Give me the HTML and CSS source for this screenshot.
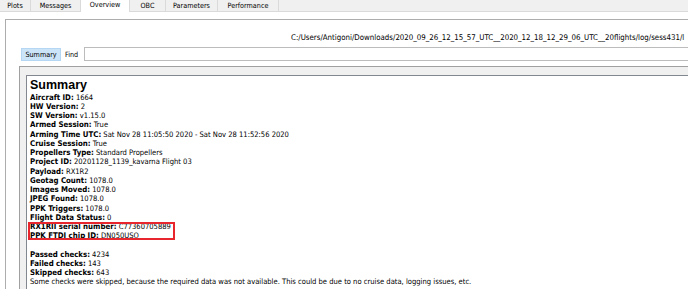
FILE: index.html
```html
<!DOCTYPE html>
<html>
<head>
<meta charset="utf-8">
<link rel="stylesheet" href="styles.css">
</head>
<body>
<div class="tabs">
  <div class="tab w-plots">Plots</div>
  <div class="tab w-msg">Messages</div>
  <div class="tab tab-active w-ov">Overview</div>
  <div class="tab w-obc">OBC</div>
  <div class="tab w-par">Parameters</div>
  <div class="tab w-perf">Performance</div>
</div>
<div class="panel">
  <div class="path">C:/Users/Antigoni/Downloads/2020_09_26_12_15_57_UTC__2020_12_18_12_29_06_UTC__20flights/log/sess431/l</div>
  <div class="findrow">
    <div class="btn">Summary</div>
    <div class="findlabel">Find</div>
    <div class="findinput"></div>
  </div>
  <div class="frame">
    <div class="content">
      <div class="title">Summary</div>
      <div class="line"><b>Aircraft ID:</b> 1664</div>
      <div class="line"><b>HW Version:</b> 2</div>
      <div class="line"><b>SW Version:</b> v1.15.0</div>
      <div class="line"><b>Armed Session:</b> True</div>
      <div class="line"><b>Arming Time UTC:</b> Sat Nov 28 11:05:50 2020 - Sat Nov 28 11:52:56 2020</div>
      <div class="line"><b>Cruise Session:</b> True</div>
      <div class="line"><b>Propellers Type:</b> Standard Propellers</div>
      <div class="line"><b>Project ID:</b> 20201128_1139_kavarna Flight 03</div>
      <div class="line"><b>Payload:</b> RX1R2</div>
      <div class="line"><b>Geotag Count:</b> 1078.0</div>
      <div class="line"><b>Images Moved:</b> 1078.0</div>
      <div class="line"><b>JPEG Found:</b> 1078.0</div>
      <div class="line"><b>PPK Triggers:</b> 1078.0</div>
      <div class="line"><b>Flight Data Status:</b> 0</div>
      <div class="marked">
        <div class="line"><b>RX1RII serial number:</b> C77360705889</div>
        <div class="line"><b>PPK FTDI chip ID:</b> DN050USO</div>
      </div>
      <div class="spacer"></div>
      <div class="line"><b>Passed checks:</b> 4234</div>
      <div class="line"><b>Failed checks:</b> 143</div>
      <div class="line"><b>Skipped checks:</b> 643</div>
      <div class="line">Some checks were skipped, because the required data was not available. This could be due to no cruise data, logging issues, etc.</div>
    </div>
  </div>
</div>
</body>
</html>
```
FILE: styles.css
```css
html, body {
  margin: 0;
  padding: 0;
  background: #ffffff;
  overflow: hidden;
}
body {
  width: 688px;
  height: 289px;
  font-family: "DejaVu Sans Condensed", "DejaVu Sans", sans-serif;
  color: #000;
}
.tabs {
  display: flex;
  height: 11px;
  background: #f0f0f0;
  border-bottom: 1px solid #dadada;
}
.tab {
  box-sizing: border-box;
  height: 11px;
  font-size: 7.2px;
  line-height: 11px;
  text-align: center;
  border-right: 1px solid #dadada;
  color: #000;
}
.tab-active {
  background: #fff;
  height: 12px;
  line-height: 10px;
  margin-bottom: -1px;
}
.w-plots { width: 31px; }
.w-msg { width: 50px; }
.w-ov { width: 49px; }
.w-obc { width: 36px; }
.w-par { width: 52px; }
.w-perf { width: 61px; }

.panel {
  margin: 7px 0 0 5px;
  border-top: 1px solid #adadad;
  border-left: 1px solid #adadad;
  height: 269px;
  overflow: hidden;
}
.path {
  margin-top: 13px;
  padding-left: 285px;
  font-size: 7.84px;
  line-height: 10px;
  white-space: nowrap;
  overflow: hidden;
}
.findrow {
  display: flex;
  align-items: center;
  margin: 4px 0 0 15px;
  height: 14px;
}
.btn {
  box-sizing: border-box;
  width: 40px;
  height: 13px;
  background: #cce4f7;
  border: 1px solid #b5d7f3;
  font-size: 7.2px;
  line-height: 11px;
  text-align: center;
}
.findlabel {
  font-size: 7.2px;
  margin-left: 4px;
  width: 19px;
}
.findinput {
  flex: 1;
  height: 12px;
  border: 1px solid #bcbcbc;
  border-right: none;
  background: #fff;
}
.frame {
  margin: 5px 0 0 13px;
  border-top: 1px solid #a0a0a0;
  border-left: 1px solid #a0a0a0;
  background: #f0f0f0;
  padding: 8px 0 0 6px;
}
.content {
  background: #fff;
  border-top: 1px solid #828790;
  border-left: 1px solid #828790;
  padding: 2px 0 20px 3px;
  font-size: 7.55px;
  line-height: 9.25px;
  white-space: nowrap;
}
.title {
  font-family: "Liberation Sans", Arial, sans-serif;
  font-weight: bold;
  font-size: 12.5px;
  line-height: 14.5px;
}
.line b {
  font-weight: bold;
  font-size: 7.8px;
}
.marked {
  position: relative;
}
.marked::after {
  content: "";
  position: absolute;
  left: -2px;
  top: 0px;
  width: 143px;
  height: 14px;
  border: 2px solid #e8262e;
}
.spacer {
  height: 9px;
}
```
